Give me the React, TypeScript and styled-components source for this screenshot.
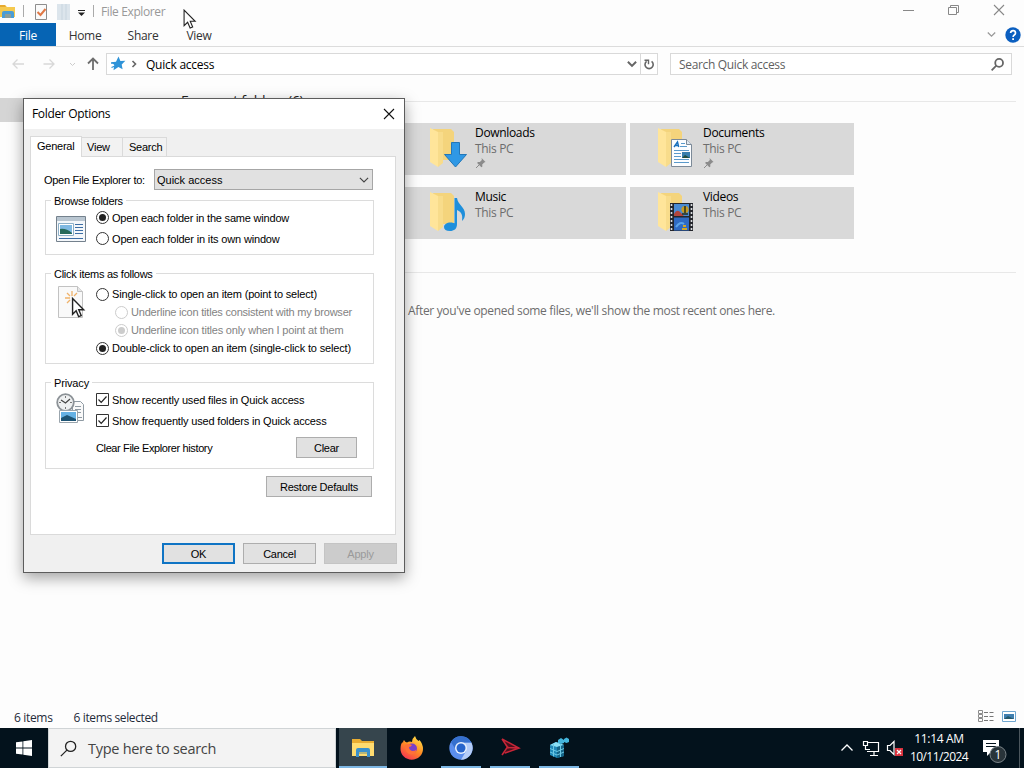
import type { ReactNode } from 'react';
import styled, { createGlobalStyle, css } from 'styled-components';

const GlobalStyle = createGlobalStyle`
  * { box-sizing: border-box; }
  body {
    margin: 0;
    background: #fdfdfd;
    overflow: hidden;
  }
`;

const uiFont = `'Open Sans', 'Noto Sans', sans-serif`;
const dialogFont = `'Liberation Sans', Arial, sans-serif`;

const Desktop = styled.div`
  position: relative;
  display: flex;
  flex-direction: column;
  width: 1024px;
  height: 768px;
  overflow: hidden;
  font-family: ${uiFont};
  font-size: 12px;
  color: #000;
`;

const Text = styled.span<{ $track?: number }>`
  white-space: nowrap;
  letter-spacing: ${(p) => p.$track ?? -0.33}px;
`;

/* ---------- explorer window ---------- */

const Explorer = styled.div`
  display: flex;
  flex-direction: column;
  height: 728px;
  background: #fdfdfd;
`;

const TitleBar = styled.div`
  display: flex;
  align-items: flex-start;
  height: 23px;
  padding-right: 19px;
`;

const QuickTools = styled.div`
  display: flex;
  flex: 1;
  align-items: center;
  gap: 1px;
  color: #999;
`;

const WindowButtons = styled.div`
  display: flex;
  gap: 34px;
  height: 20px;
`;

const RibbonTabs = styled.div`
  display: flex;
  height: 24px;
  border-bottom: 1px solid #dcdcdc;
`;

const RibbonTab = styled.div<{ $width: number; $active?: boolean }>`
  display: flex;
  align-items: center;
  justify-content: center;
  width: ${(p) => p.$width}px;
  height: 23px;
  padding-top: 1px;
  letter-spacing: -0.3px;
  color: ${(p) => (p.$active ? '#fff' : '#333')};
  background: ${(p) => (p.$active ? '#0664b4' : 'transparent')};
`;

const RibbonRight = styled.div`
  display: flex;
  align-items: center;
  gap: 9px;
  margin-left: auto;
  padding-right: 3px;
`;

const AddressRow = styled.div`
  display: flex;
  align-items: center;
  height: 34px;
  padding-right: 12px;
`;

const AddressBar = styled.div`
  display: flex;
  align-items: center;
  width: 552px;
  height: 22px;
  border: 1px solid #d9d9d9;
  background: #fff;
`;

const Refresh = styled.div`
  display: flex;
  align-items: center;
  justify-content: center;
  width: 17px;
  height: 20px;
  border-left: 1px solid #d9d9d9;
`;

const SearchBox = styled.div`
  display: flex;
  align-items: center;
  justify-content: space-between;
  width: 342px;
  height: 22px;
  margin-left: 12px;
  padding: 0 7px 0 8px;
  border: 1px solid #d9d9d9;
  background: #fff;
  color: #5f5f5f;
`;

const Content = styled.div`
  display: flex;
  flex: 1;
`;

const NavPane = styled.div`
  width: 170px;
  padding-top: 17px;
`;

const NavSelected = styled.div`
  height: 24px;
  background: #d5d5d5;
`;

const FilePane = styled.div`
  flex: 1;
  padding-right: 8px;
`;

const GroupHeading = styled.div`
  display: flex;
  align-items: center;
  height: 40px;
  margin-bottom: 2px;
  padding-left: 11px;
  font-size: 14px;
  line-height: 18px;
  color: #222;

  &::after {
    content: '';
    flex: 1;
    height: 1px;
    margin-left: 8px;
    background: #e8e8e8;
  }
`;

const Tiles = styled.div`
  display: grid;
  grid-template-columns: 224px 224px;
  grid-auto-rows: 52px;
  gap: 12px 4px;
  padding-left: 232px;
`;

const Tile = styled.div`
  display: flex;
  padding-left: 26px;
  background: #d9d9d9;
`;

const TileIcon = styled.div`
  width: 47px;
  padding-top: 4px;
`;

const TileText = styled.div`
  display: flex;
  flex-direction: column;
  padding-top: 2px;
  line-height: 16px;
`;

const Muted = styled(Text)`
  color: #6d6d6d;
`;

const Divider = styled.div`
  height: 1px;
  margin: 33px 0 29px 4px;
  background: #e8e8e8;
`;

const EmptyNote = styled.div`
  padding-left: 238px;
  line-height: 18px;
  color: #6d6d6d;
`;

const StatusBar = styled.div`
  display: flex;
  align-items: center;
  gap: 21px;
  height: 22px;
  padding: 0 8px 0 14px;
  color: #1f2b3a;
`;

const ViewModes = styled.div`
  display: flex;
  gap: 7px;
  height: 15px;
  margin-left: auto;
`;

/* ---------- folder options dialog ---------- */

const Dialog = styled.div`
  position: absolute;
  left: 23px;
  top: 98px;
  display: flex;
  flex-direction: column;
  width: 382px;
  height: 475px;
  border: 1px solid #5c5c5c;
  background: #f0f0f0;
  box-shadow: 0 5px 14px rgba(0, 0, 0, 0.36);
  font-family: ${dialogFont};
  font-size: 11px;
`;

const DialogTitle = styled.div`
  display: flex;
  align-items: center;
  justify-content: space-between;
  height: 30px;
  padding: 0 9px 1px 8px;
  background: #fff;
  font-family: ${uiFont};
  font-size: 12px;
`;

const TabStrip = styled.div`
  display: flex;
  align-items: flex-end;
  height: 27px;
  padding-left: 6px;
`;

const Tab = styled.div<{ $width: number; $pad?: number; $active?: boolean }>`
  position: relative;
  display: flex;
  align-items: center;
  width: ${(p) => p.$width}px;
  height: 19px;
  padding-left: ${(p) => p.$pad ?? 6}px;
  border: 1px solid #dadada;
  border-bottom: none;
  border-left-width: 0;
  background: #f2f2f2;

  ${(p) =>
    p.$active &&
    css`
      z-index: 1;
      height: 21px;
      margin-bottom: -1px;
      padding-bottom: 2px;
      border-left-width: 1px;
      background: #fff;
    `}
`;

const Panel = styled.div`
  width: 366px;
  height: 379px;
  margin-left: 6px;
  padding: 12px 21px 0 14px;
  border: 1px solid #dadada;
  background: #fff;
`;

const OpenToRow = styled.div`
  display: flex;
  align-items: center;
  justify-content: space-between;
  width: 329px;
  height: 21px;
  margin: 0 0 10px -1px;
`;

const Select = styled.div`
  display: flex;
  align-items: center;
  justify-content: space-between;
  width: 219px;
  height: 21px;
  padding: 0 3px 0 2px;
  border: 1px solid #a6a6a6;
  background: #e1e1e1;
`;

const Group = styled.div<{ $height: number }>`
  width: 329px;
  height: ${(p) => p.$height}px;
  border: 1px solid #dcdcdc;

  & + & {
    margin-top: 18px;
  }
`;

const Legend = styled.div`
  width: fit-content;
  height: 13px;
  margin: -7px 0 0 5px;
  padding: 0 3px;
  line-height: 15px;
  background: #fff;
`;

const GroupBody = styled.div<{ $top?: number }>`
  display: flex;
  padding-top: ${(p) => p.$top ?? 0}px;
`;

const GroupIcon = styled.div<{ $top: number }>`
  width: 50px;
  padding: ${(p) => p.$top}px 0 0 10px;
`;

const Options = styled.div`
  flex: 1;
`;

const OptionRow = styled.div<{ $height: number; $indent?: boolean; $disabled?: boolean }>`
  display: flex;
  align-items: center;
  gap: 3px;
  height: ${(p) => p.$height}px;
  padding-left: ${(p) => (p.$indent ? 19 : 0)}px;
  color: ${(p) => (p.$disabled ? '#838383' : '#000')};
`;

const Radio = styled.span<{ $checked?: boolean; $disabled?: boolean }>`
  display: flex;
  align-items: center;
  justify-content: center;
  width: 13px;
  height: 13px;
  border: 1px solid ${(p) => (p.$disabled ? '#cccccc' : '#333')};
  border-radius: 50%;
  background: #fff;

  &::after {
    content: '';
    width: 7px;
    height: 7px;
    border-radius: 50%;
    background: ${(p) => (!p.$checked ? 'transparent' : p.$disabled ? '#cccccc' : '#222')};
  }
`;

const HistoryRow = styled.div`
  display: flex;
  align-items: center;
  justify-content: space-between;
  margin-top: 6px;
  padding-right: 16px;
`;

const Button = styled.div<{ $width: number; $kind?: 'default' | 'disabled' }>`
  display: flex;
  align-items: center;
  justify-content: center;
  width: ${(p) => p.$width}px;
  height: 21px;
  border: ${(p) =>
    p.$kind === 'default' ? '2px solid #0f74c4' : p.$kind === 'disabled' ? '1px solid #c4c4c4' : '1px solid #adadad'};
  background: ${(p) => (p.$kind === 'disabled' ? '#cccccc' : '#e1e1e1')};
  color: ${(p) => (p.$kind === 'disabled' ? '#9a9a9a' : '#000')};
  letter-spacing: -0.25px;
`;

const RestoreRow = styled.div`
  display: flex;
  justify-content: flex-end;
  width: 327px;
  margin-top: 7px;
`;

const DialogButtons = styled.div`
  display: flex;
  justify-content: flex-end;
  gap: 8px;
  padding: 8px 7px 0 0;
`;

const Pointer = styled.svg`
  position: absolute;
  left: 183px;
  top: 9px;
`;

/* ---------- taskbar ---------- */

const Taskbar = styled.div`
  display: flex;
  height: 40px;
  background: #03121c;
  color: #fff;
`;

const StartButton = styled.div`
  display: flex;
  align-items: center;
  justify-content: center;
  width: 48px;
`;

const TaskSearch = styled.div`
  display: flex;
  align-items: center;
  gap: 11px;
  width: 288px;
  margin-right: 3px;
  padding-left: 11px;
  border: 1px solid #d0d4d6;
  background: #f3f3f3;
  color: #444;
  font-size: 14.5px;
`;

const TaskItem = styled.div<{ $state?: 'active' | 'open' }>`
  display: flex;
  flex-direction: column;
  align-items: center;
  width: 48px;
  margin-right: 1px;
  padding-top: 8px;
  background: ${(p) => (p.$state === 'active' ? '#36454d' : 'transparent')};

  &::after {
    content: '';
    width: ${(p) => (p.$state === 'active' ? 48 : 40)}px;
    height: 2px;
    margin-top: auto;
    background: ${(p) => (p.$state ? '#7db7e4' : 'transparent')};
  }
`;

const Tray = styled.div`
  display: flex;
  align-items: center;
  margin-left: auto;
`;

const Clock = styled.div`
  display: flex;
  flex-direction: column;
  align-items: center;
  width: 64px;
  margin: 0 8px 0 3px;
  line-height: 18px;
`;

const ShowDesktop = styled.div`
  width: 5px;
  height: 40px;
  margin-left: 4px;
  border-left: 1px solid #4b565d;
`;

/* ---------- icons ---------- */

const ToolbarIcons = () => (
  <svg width="100" height="23" viewBox="0 0 100 23">
    <path d="M0 5h5l2 2h8v10H0z" fill="#f5c94e" />
    <path d="M0 5h5l1 2H0z" fill="#e6a92f" />
    <path d="M2 18v-5q0-2 2-2h8q2 0 2 2v5h-3v-4H5v4z" fill="#4a9dd6" />
    <path d="M5 14h6v4H5z" fill="#8c9e99" />
    <path d="M23.5 5v12M93.5 5v12" stroke="#aaa" />
    <path d="M35.500 4.500h11v15h-11z" fill="#fafafa" stroke="#8d8d8d" />
    <path d="m37.500 12 3 3 5-6" fill="none" stroke="#e07845" strokeWidth="2" />
    <path d="M57 4h13v16H57z" fill="#dce5ec" />
    <path d="M62 4v16M66 4v16" stroke="#c8d5df" />
    <path d="M78 10.500h7" stroke="#222" />
    <path d="M78 12.500h7l-3.500 3.500z" fill="#222" />
  </svg>
);

const MinimizeIcon = () => (
  <svg width="11" height="20" viewBox="0 0 11 20">
    <path d="M0 10.500h11" stroke="#888" />
  </svg>
);

const RestoreIcon = () => (
  <svg width="11" height="20" viewBox="0 0 11 20">
    <path d="M.5 7.500h8v7h-8zM2.500 7.500v-2h8v7h-2" fill="none" stroke="#888" />
  </svg>
);

const CloseIcon = ({ color }: { color: string }) => (
  <svg width="12" height="20" viewBox="0 0 12 20">
    <path d="m1 5 10 10M11 5 1 15" stroke={color} strokeWidth="1.100" />
  </svg>
);

const HelpIcon = () => (
  <svg width="16" height="16" viewBox="0 0 16 16">
    <circle cx="8" cy="8" r="7.700" fill="#0b5fc0" />
    <path d="M5.600 6q.2-2.300 2.500-2.300T10.500 6q0 1.200-1.200 2T8.100 10" fill="none" stroke="#fff" strokeWidth="1.700" />
    <path d="M7.200 11.200h1.800V13H7.200z" fill="#fff" />
  </svg>
);

const Chevron = ({ color, size = 9, width = 1.3 }: { color: string; size?: number; width?: number }) => (
  <svg width={size} height={size} viewBox="0 0 9 9">
    <path d="m.8 2.500 3.700 3.700 3.700-3.700" fill="none" stroke={color} strokeWidth={width} />
  </svg>
);

const NavArrows = () => (
  <svg width="106" height="22" viewBox="0 0 106 22">
    <path d="M24 11H13M17.500 6.500 13 11l4.500 4.500M43.500 11H54M49.500 6.500 54 11l-4.500 4.500" fill="none" stroke="#d8d8d8" strokeWidth="1.300" />
    <path d="m70 10 2.500 2.500L75 10" fill="none" stroke="#ccc" />
    <path d="M93 17V6M88 10.500 93 5.500l5 5" fill="none" stroke="#6e6e6e" strokeWidth="1.800" />
  </svg>
);

const StarIcon = () => (
  <svg width="39" height="16" viewBox="0 0 39 16">
    <path d="m11.500.5 1.900 4.500 5-.2-3.700 3.600.9 4.800-4.200-2.200-4.900 3.200.8-5.200L4.500 6.300l4.500-.6z" fill="#2f93d8" />
    <path d="M4 7h4M4.500 11.500 8 10" stroke="#2f93d8" strokeWidth="1.300" />
    <path d="m25.500 5 3 3-3 3" fill="none" stroke="#666" strokeWidth="1.600" />
  </svg>
);

const RefreshIcon = () => (
  <svg width="12" height="13" viewBox="0 0 12 13">
    <path d="M8.600 3.300a4.100 4.100 0 1 1-5 0" fill="none" stroke="#666" strokeWidth="1.600" />
    <path d="M1.500 2.200h4v4" fill="none" stroke="#666" strokeWidth="1.400" />
  </svg>
);

const MagnifierIcon = ({ size, color, width }: { size: number; color: string; width: number }) => (
  <svg width={size} height={size} viewBox="0 0 16 16">
    <circle cx="10" cy="6" r="4.800" fill="none" stroke={color} strokeWidth={width} />
    <path d="M6.500 9.500.8 15.200" stroke={color} strokeWidth={width} />
  </svg>
);

const FolderBase = ({ children }: { children: ReactNode }) => (
  <svg width="40" height="44" viewBox="0 0 40 44">
    <path d="M5 2h18l3 3v28H9z" fill="#f4d47c" />
    <path d="M2 1l8 4v35l-8-5z" fill="#ffe59a" />
    <path d="M10 5h5v31l-5 4z" fill="#f8dc8b" />
    {children}
  </svg>
);

const DownloadsIcon = () => (
  <FolderBase>
    <path d="M23.500 15.500h8v12h7L27.500 40 16.500 27.500h7z" fill="#2f98e5" stroke="#2377b8" />
  </FolderBase>
);

const MusicIcon = () => (
  <FolderBase>
    <path
      transform="translate(2 0)"
      d="M24.500 7h2.500c1 7 8 9 8 16 0 3-1 5-3 7 1-7-1-9-5-11v14c0 5-3 7-7 7s-6-1.500-6-4 3-4.500 6.500-4.500c1.500 0 3 .3 4 .8z"
      fill="#1e8fdb"
    />
  </FolderBase>
);

const DocumentsIcon = () => (
  <FolderBase>
    <path d="M15.500 12.500h15l5 5v22h-20z" fill="#fbfdff" stroke="#7c8a98" />
    <path d="M30.500 12.500v5h5" fill="#dfe8f0" stroke="#7c8a98" />
    <path d="m18 20 3.500-5 1.200 5M19.500 18.500h3" fill="none" stroke="#1970bd" strokeWidth="1.400" />
    <path d="M25 16.500h4M24 19.500h7M18 23.500h15M18 26.500h7M18 29.500h7M18 32.500h15M18 35.500h15" stroke="#5a9acb" />
    <path d="M26 25h8v6h-8z" fill="#367eae" />
    <path d="m26 31 3-3 5 3z" fill="#1f4e3e" />
  </FolderBase>
);

const VideosIcon = () => (
  <FolderBase>
    <path d="M14 12h23v28H14z" fill="#24262c" />
    <path d="M18 13h15v12H18z" fill="#4a8bd2" />
    <path d="M18 26.500h15v13H18z" fill="#2f6bc4" />
    <path d="M15.500 13v26M35.500 13v26" stroke="#d9dde0" strokeWidth="1.600" strokeDasharray="2 2" />
    <path d="M18 23q3-6 7-1l3 3H18z" fill="#b3453c" />
    <circle cx="29" cy="18.500" r="3.600" fill="#c79b22" />
    <path d="M29 15v7M26 23h6" stroke="#27301b" strokeWidth="1.500" />
    <path d="M20 36q4-6 8-3" fill="none" stroke="#5ba4ea" strokeWidth="2" />
    <path d="M26 37h5v2h-5zM27 34h3v2h-3z" fill="#d3a827" />
  </FolderBase>
);

const PinIcon = () => (
  <svg width="12" height="12" viewBox="0 0 12 12">
    <path d="m6.500 1 4 4-1.300.4-2 2 .2 2-1 .8L2.100 5.900l.8-1 2 .2 2-2z" fill="#8b8b8b" />
    <path d="M4.500 7.500 1 11" stroke="#8b8b8b" />
  </svg>
);

const DetailsViewIcon = () => (
  <svg width="17" height="13" viewBox="0 0 17 13">
    <path d="M.5.5h4v3h-4zM.5 4.500h4v3h-4zM.5 8.500h4v3h-4z" fill="none" stroke="#8a8a8a" />
    <path d="M6 2.500h10M6 6.500h10M6 10.500h10" stroke="#777" strokeDasharray="4 1.500" />
  </svg>
);

const ThumbViewIcon = () => (
  <svg width="14" height="13" viewBox="0 0 14 13">
    <path d="M.5 1.500h13v10H.5z" fill="#fff" stroke="#70a7d0" />
    <path d="M2 4h10v5H2z" fill="#3f7fb0" />
    <path d="m2 9 4-3 6 3z" fill="#24586a" />
  </svg>
);

const BrowseIcon = () => (
  <svg width="31" height="28" viewBox="0 0 31 28">
    <path d="M.5 1.500h29v25H.5z" fill="#f4f7fa" stroke="#74818d" />
    <path d="M1 2h28v4H1z" fill="#b9c6d1" />
    <path d="M2.500 8.500h15v12h-15z" fill="#fff" stroke="#8db0c8" />
    <path d="M4 10h12v9H4z" fill="#7fb9e2" />
    <path d="M4 14q6-1 12 4v1H4z" fill="#266a5a" />
    <path d="M19 9.500h8M19 12.500h8M19 15.500h8M19 18.500h8M3 23.500h24" stroke="#3c6ea5" strokeWidth="1.200" />
  </svg>
);

const arrowPath = 'M1 1v14.500l3.300-3.200 2.300 5.400 2.400-1-2.300-5.300h4.600z';

const ClickIcon = () => (
  <svg width="30" height="34" viewBox="0 0 30 34">
    <path d="M2.500.5h19l5 5v26h-24z" fill="#f9f9f9" stroke="#c2c2c2" />
    <path d="M21.500.5v5h5" fill="#e6e6e6" stroke="#c2c2c2" />
    <path d="M16 5v5M9 12h5M11 7l3 3M21 7l-3 3M11 17l3-3" stroke="#efb26a" strokeWidth="1.300" />
    <g transform="translate(15.500 11.500) scale(1.080)">
      <path d={arrowPath} fill="#fff" stroke="#222" strokeWidth="1.300" />
    </g>
  </svg>
);

const PrivacyIcon = () => (
  <svg width="31" height="34" viewBox="0 0 31 34">
    <path d="M16.500 8.500h8l3 3v16h-11z" fill="#fafafa" stroke="#8f9aa3" />
    <path d="M19 13.500h6M19 16.500h6M19 19.500h6M22 24.500h4" stroke="#8f9aa3" />
    <circle cx="9.500" cy="9.500" r="8.300" fill="#eef0f1" stroke="#8c9297" strokeWidth="1.800" />
    <path d="M9.500 3v2M9.500 14v2M3 9.500h2M14 9.500h2" stroke="#777" />
    <path d="m5 7 4.500 3L14 6" fill="none" stroke="#444" strokeWidth="1.200" />
    <path d="M3.500 17.500h18v12h-18z" fill="#fff" stroke="#9aa5ad" />
    <path d="M5 19h15v9H5z" fill="#65b1e4" />
    <path d="m5 25 6-3 9 4v2H5z" fill="#1d5474" />
  </svg>
);

const CheckIcon = () => (
  <svg width="13" height="13" viewBox="0 0 13 13">
    <path d="M.5.5h12v12H.5z" fill="#fff" stroke="#333" />
    <path d="m2.500 6.500 2.700 2.800 5.300-5.800" fill="none" stroke="#222" strokeWidth="1.200" />
  </svg>
);

const WindowsLogo = () => (
  <svg width="16" height="16" viewBox="0 0 16 16" fill="#fff">
    <path d="m0 2.300 6.500-.9v6.200H0zM7.300 1.200 16 0v7.600H7.300zM0 8.400h6.500v6.200L0 13.700zM7.300 8.400H16V16l-8.700-1.200z" />
  </svg>
);

const TaskFolderIcon = () => (
  <svg width="24" height="24" viewBox="0 0 24 24">
    <path d="M1 3h8l2 2h12v15H1z" fill="#e9ad32" />
    <path d="M1 7h22v13H1z" fill="#ffdc70" />
    <path d="M5 21v-7q0-2 2-2h10q2 0 2 2v7h-3v-5H8v5z" fill="#3b91cc" />
    <path d="M8 16h8v2H8z" fill="#b5b67b" />
  </svg>
);

const FirefoxIcon = () => (
  <svg width="24" height="24" viewBox="0 0 24 24">
    <defs>
      <linearGradient id="flame" x1=".8" y1="0" x2=".2" y2="1">
        <stop offset="0" stopColor="#ffe247" />
        <stop offset=".5" stopColor="#ff8a24" />
        <stop offset="1" stopColor="#f52f55" />
      </linearGradient>
    </defs>
    <path d="M4 4q1 2 3 2.500Q9.500 5 12 6q0-3.500 3-6 1 3.500 3.500 5l1-1q3.500 4 3.500 9a11 10.500 0 0 1-22.500 0Q.5 8 2.500 6q.3 1 .5 1 0-2 1-3z" fill="url(#flame)" />
    <circle cx="12" cy="12.500" r="5" fill="#7a3fc8" />
    <path d="M5 9q3-2 7 0-1 2-3 2 0 3 3.500 4 2.500 0 4-1.500-1 5-5.500 5-6-1-6-9.500z" fill="#ff7139" />
  </svg>
);

const ChromiumIcon = () => (
  <svg width="24" height="24" viewBox="0 0 24 24">
    <circle cx="12" cy="12" r="11.700" fill="#5b8eed" />
    <path d="M12 6.500h10.300A11.700 11.700 0 0 1 12 23.700l5-8.500z" fill="#b5cdf8" />
    <path d="M2 6a11.700 11.700 0 0 1 20.300.5H12L7 14z" fill="#3570ce" />
    <circle cx="12" cy="12" r="6" fill="#e9f1fd" />
    <circle cx="12" cy="12" r="4.500" fill="#2765cc" />
  </svg>
);

const DartIcon = () => (
  <svg width="24" height="24" viewBox="0 0 24 24">
    <path d="m4 3 17 9L4 19l5-6z" fill="#4a0f1c" />
    <path d="m4 3 5.500 8L4 19M4 3l17 9-14 5M9 11.500l12 .5" fill="none" stroke="#c72638" strokeWidth="1.500" />
  </svg>
);

const RegistryIcon = () => (
  <svg width="24" height="24" viewBox="0 0 24 24">
    <path d="m3 9 6-3 8 3v11l-7 2-7-3z" fill="#2088b7" />
    <path d="m3 9 6-3 8 3-7 2z" fill="#8be0f5" />
    <path d="m10 11 7-2v11l-7 2z" fill="#146487" />
    <path d="M6.500 7.500v13M13.500 8v13M3 12.500l7 3 7-3M3 16l7 3 7-3" fill="none" stroke="#6cc8e4" />
    <path d="m11 4 3-2 3 2v3l-3 1-3-1zM17 3l2.500-1.500L22 3v3l-2.500 1L17 6z" fill="#44b5dc" />
  </svg>
);

const TrayIcons = () => (
  <svg width="64" height="24" viewBox="0 0 64 24">
    <path d="m1.500 14.500 5.500-5.500 5.500 5.500" fill="none" stroke="#fff" strokeWidth="1.300" />
    <path d="M27 6.500h11.500v9H27M30 19.500h8M34 15.500v4" fill="none" stroke="#fff" strokeWidth="1.200" />
    <path d="M23.500 5.500h4v4h-4zM25.500 9.500v4H30" fill="none" stroke="#fff" strokeWidth="1.200" />
    <path d="M47.500 9.500H50l4-4v13l-4-4h-2.500z" fill="none" stroke="#fff" strokeWidth="1.200" />
    <path d="M55 12h8v8h-8z" fill="#d9313d" />
    <path d="m57 14 4 4m0-4-4 4" stroke="#fff" strokeWidth="1.200" />
  </svg>
);

const NotificationIcon = () => (
  <svg width="36" height="32" viewBox="0 0 36 32">
    <path d="M4 8h16v12h-8l-4 4v-4H4z" fill="#fff" />
    <path d="M7 11.500h10M7 14.500h10" stroke="#03121c" />
    <circle cx="19" cy="22.500" r="8" fill="#29343a" stroke="#7a8388" />
    <text x="19" y="27" fill="#fff" fontSize="12" textAnchor="middle">
      1
    </text>
  </svg>
);

const tiles = [
  { name: 'Downloads', icon: <DownloadsIcon />, pinned: true },
  { name: 'Documents', icon: <DocumentsIcon />, pinned: true },
  { name: 'Music', icon: <MusicIcon />, pinned: false },
  { name: 'Videos', icon: <VideosIcon />, pinned: false },
];

function FolderOptions() {
  return (
    <Dialog>
      <DialogTitle>
        <Text>Folder Options</Text>
        <CloseIcon color="#111" />
      </DialogTitle>
      <TabStrip>
        <Tab $width={52} $active>
          <Text $track={-0.25}>General</Text>
        </Tab>
        <Tab $width={41} $pad={5}>
          <Text $track={-0.2}>View</Text>
        </Tab>
        <Tab $width={44}>
          <Text $track={-0.25}>Search</Text>
        </Tab>
      </TabStrip>
      <Panel>
        <OpenToRow>
          <Text $track={-0.28}>Open File Explorer to:</Text>
          <Select>
            <Text $track={0}>Quick access</Text>
            <Chevron color="#444" width={1} size={10} />
          </Select>
        </OpenToRow>
        <Group $height={55}>
          <Legend>
            <Text $track={-0.28}>Browse folders</Text>
          </Legend>
          <GroupBody>
            <GroupIcon $top={8}>
              <BrowseIcon />
            </GroupIcon>
            <Options>
              <OptionRow $height={21}>
                <Radio $checked />
                <Text $track={-0.2}>Open each folder in the same window</Text>
              </OptionRow>
              <OptionRow $height={21}>
                <Radio />
                <Text $track={-0.16}>Open each folder in its own window</Text>
              </OptionRow>
            </Options>
          </GroupBody>
        </Group>
        <Group $height={91}>
          <Legend>
            <Text $track={-0.27}>Click items as follows</Text>
          </Legend>
          <GroupBody $top={5}>
            <GroupIcon $top={1}>
              <ClickIcon />
            </GroupIcon>
            <Options>
              <OptionRow $height={18}>
                <Radio />
                <Text $track={-0.17}>Single-click to open an item (point to select)</Text>
              </OptionRow>
              <OptionRow $height={18} $indent $disabled>
                <Radio $disabled />
                <Text $track={-0.21}>Underline icon titles consistent with my browser</Text>
              </OptionRow>
              <OptionRow $height={18} $indent $disabled>
                <Radio $checked $disabled />
                <Text $track={-0.19}>Underline icon titles only when I point at them</Text>
              </OptionRow>
              <OptionRow $height={18}>
                <Radio $checked />
                <Text $track={-0.15}>Double-click to open an item (single-click to select)</Text>
              </OptionRow>
            </Options>
          </GroupBody>
        </Group>
        <Group $height={87}>
          <Legend>
            <Text $track={-0.15}>Privacy</Text>
          </Legend>
          <GroupBody>
            <GroupIcon $top={4}>
              <PrivacyIcon />
            </GroupIcon>
            <Options>
              <OptionRow $height={21}>
                <CheckIcon />
                <Text $track={-0.16}>Show recently used files in Quick access</Text>
              </OptionRow>
              <OptionRow $height={21}>
                <CheckIcon />
                <Text $track={-0.17}>Show frequently used folders in Quick access</Text>
              </OptionRow>
              <HistoryRow>
                <Text $track={-0.38}>Clear File Explorer history</Text>
                <Button $width={61}>Clear</Button>
              </HistoryRow>
            </Options>
          </GroupBody>
        </Group>
        <RestoreRow>
          <Button $width={106}>Restore Defaults</Button>
        </RestoreRow>
      </Panel>
      <DialogButtons>
        <Button $width={73} $kind="default">
          OK
        </Button>
        <Button $width={73}>Cancel</Button>
        <Button $width={73} $kind="disabled">
          Apply
        </Button>
      </DialogButtons>
    </Dialog>
  );
}

function App() {
  return (
    <Desktop>
      <GlobalStyle />
      <Explorer>
        <TitleBar>
          <QuickTools>
            <ToolbarIcons />
            <Text $track={-0.38}>File Explorer</Text>
          </QuickTools>
          <WindowButtons>
            <MinimizeIcon />
            <RestoreIcon />
            <CloseIcon color="#888" />
          </WindowButtons>
        </TitleBar>
        <RibbonTabs>
          <RibbonTab $width={56} $active>
            File
          </RibbonTab>
          <RibbonTab $width={58}>Home</RibbonTab>
          <RibbonTab $width={58}>Share</RibbonTab>
          <RibbonTab $width={54}>View</RibbonTab>
          <RibbonRight>
            <Chevron color="#999" />
            <HelpIcon />
          </RibbonRight>
        </RibbonTabs>
        <AddressRow>
          <NavArrows />
          <AddressBar>
            <StarIcon />
            <Text $track={-0.25}>Quick access</Text>
            <RibbonRight>
              <Chevron color="#666" width={1.8} size={10} />
            </RibbonRight>
            <Refresh>
              <RefreshIcon />
            </Refresh>
          </AddressBar>
          <SearchBox>
            <Text>Search Quick access</Text>
            <MagnifierIcon size={13} color="#666" width={2.2} />
          </SearchBox>
        </AddressRow>
        <Content>
          <NavPane>
            <NavSelected />
          </NavPane>
          <FilePane>
            <GroupHeading>
              <Text $track={-0.3}>Frequent folders (6)</Text>
            </GroupHeading>
            <Tiles>
              {tiles.map((tile) => (
                <Tile key={tile.name}>
                  <TileIcon>{tile.icon}</TileIcon>
                  <TileText>
                    <Text>{tile.name}</Text>
                    <Muted>This PC</Muted>
                    {tile.pinned && <PinIcon />}
                  </TileText>
                </Tile>
              ))}
            </Tiles>
            <Divider />
            <EmptyNote>
              <Text>After you've opened some files, we'll show the most recent ones here.</Text>
            </EmptyNote>
          </FilePane>
        </Content>
        <StatusBar>
          <Text>6 items</Text>
          <Text $track={-0.38}>6 items selected</Text>
          <ViewModes>
            <DetailsViewIcon />
            <ThumbViewIcon />
          </ViewModes>
        </StatusBar>
      </Explorer>
      <Taskbar>
        <StartButton>
          <WindowsLogo />
        </StartButton>
        <TaskSearch>
          <MagnifierIcon size={17} color="#222" width={1.2} />
          <Text $track={-0.28}>Type here to search</Text>
        </TaskSearch>
        <TaskItem $state="active">
          <TaskFolderIcon />
        </TaskItem>
        <TaskItem>
          <FirefoxIcon />
        </TaskItem>
        <TaskItem $state="open">
          <ChromiumIcon />
        </TaskItem>
        <TaskItem $state="open">
          <DartIcon />
        </TaskItem>
        <TaskItem $state="open">
          <RegistryIcon />
        </TaskItem>
        <Tray>
          <TrayIcons />
          <Clock>
            <Text>11:14 AM</Text>
            <Text $track={-0.55}>10/11/2024</Text>
          </Clock>
          <NotificationIcon />
          <ShowDesktop />
        </Tray>
      </Taskbar>
      <FolderOptions />
      <Pointer width="14" height="21" viewBox="0 0 13 19.500">
        <path d={arrowPath} fill="#fff" stroke="#222" />
      </Pointer>
    </Desktop>
  );
}

export default App;
